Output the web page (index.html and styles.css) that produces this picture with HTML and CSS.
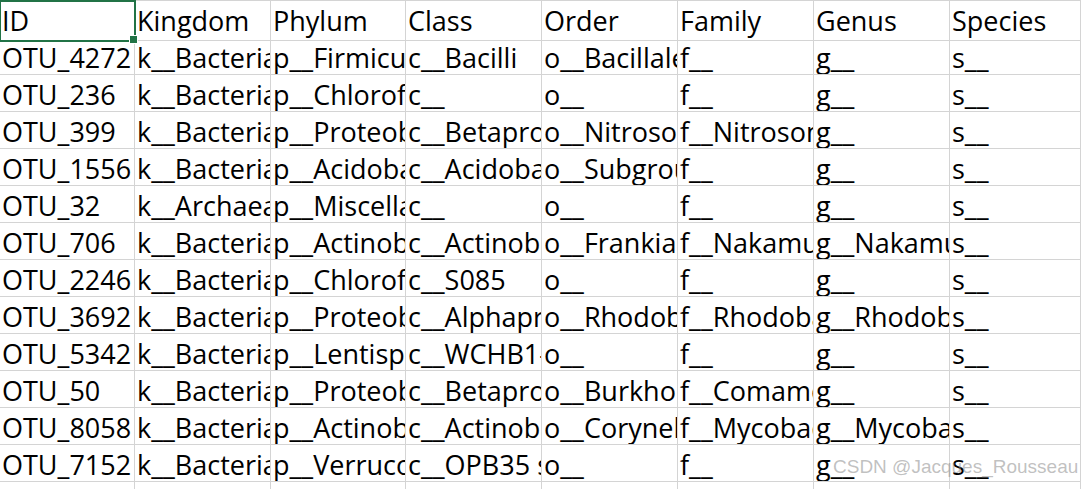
FILE: index.html
```html
<!DOCTYPE html>
<html>
<head>
<meta charset="utf-8">
<link rel="stylesheet" href="styles.css">
</head>
<body>
<div class="sheet">
  <div class="row">
    <div class="cell selected">ID<span class="handle"></span></div>
    <div class="cell">Kingdom</div>
    <div class="cell">Phylum</div>
    <div class="cell">Class</div>
    <div class="cell">Order</div>
    <div class="cell">Family</div>
    <div class="cell">Genus</div>
    <div class="cell">Species</div>
  </div>
  <div class="row">
    <div class="cell">OTU_4272</div><div class="cell">k__Bacteria</div><div class="cell">p__Firmicutes</div><div class="cell">c__Bacilli</div><div class="cell">o__Bacillales</div><div class="cell">f__</div><div class="cell">g__</div><div class="cell">s__</div>
  </div>
  <div class="row">
    <div class="cell">OTU_236</div><div class="cell">k__Bacteria</div><div class="cell">p__Chloroflexi</div><div class="cell">c__</div><div class="cell">o__</div><div class="cell">f__</div><div class="cell">g__</div><div class="cell">s__</div>
  </div>
  <div class="row">
    <div class="cell">OTU_399</div><div class="cell">k__Bacteria</div><div class="cell">p__Proteobacteria</div><div class="cell">c__Betaproteobacteria</div><div class="cell">o__Nitrosomonadales</div><div class="cell">f__Nitrosomonadaceae</div><div class="cell">g__</div><div class="cell">s__</div>
  </div>
  <div class="row">
    <div class="cell">OTU_1556</div><div class="cell">k__Bacteria</div><div class="cell">p__Acidobacteria</div><div class="cell">c__Acidobacteria</div><div class="cell">o__Subgroup_6</div><div class="cell">f__</div><div class="cell">g__</div><div class="cell">s__</div>
  </div>
  <div class="row">
    <div class="cell">OTU_32</div><div class="cell">k__Archaea</div><div class="cell">p__Miscellaneous</div><div class="cell">c__</div><div class="cell">o__</div><div class="cell">f__</div><div class="cell">g__</div><div class="cell">s__</div>
  </div>
  <div class="row">
    <div class="cell">OTU_706</div><div class="cell">k__Bacteria</div><div class="cell">p__Actinobacteria</div><div class="cell">c__Actinobacteria</div><div class="cell">o__Frankiales</div><div class="cell">f__Nakamurellaceae</div><div class="cell">g__Nakamurella</div><div class="cell">s__</div>
  </div>
  <div class="row">
    <div class="cell">OTU_2246</div><div class="cell">k__Bacteria</div><div class="cell">p__Chloroflexi</div><div class="cell">c__S085</div><div class="cell">o__</div><div class="cell">f__</div><div class="cell">g__</div><div class="cell">s__</div>
  </div>
  <div class="row">
    <div class="cell">OTU_3692</div><div class="cell">k__Bacteria</div><div class="cell">p__Proteobacteria</div><div class="cell">c__Alphaproteobacteria</div><div class="cell">o__Rhodobacterales</div><div class="cell">f__Rhodobacteraceae</div><div class="cell">g__Rhodobacter</div><div class="cell">s__</div>
  </div>
  <div class="row">
    <div class="cell">OTU_5342</div><div class="cell">k__Bacteria</div><div class="cell">p__Lentisphaerae</div><div class="cell">c__WCHB1-41</div><div class="cell">o__</div><div class="cell">f__</div><div class="cell">g__</div><div class="cell">s__</div>
  </div>
  <div class="row">
    <div class="cell">OTU_50</div><div class="cell">k__Bacteria</div><div class="cell">p__Proteobacteria</div><div class="cell">c__Betaproteobacteria</div><div class="cell">o__Burkholderiales</div><div class="cell">f__Comamonadaceae</div><div class="cell">g__</div><div class="cell">s__</div>
  </div>
  <div class="row">
    <div class="cell">OTU_8058</div><div class="cell">k__Bacteria</div><div class="cell">p__Actinobacteria</div><div class="cell">c__Actinobacteria</div><div class="cell">o__Corynebacteriales</div><div class="cell">f__Mycobacteriaceae</div><div class="cell">g__Mycobacterium</div><div class="cell">s__</div>
  </div>
  <div class="row">
    <div class="cell">OTU_7152</div><div class="cell">k__Bacteria</div><div class="cell">p__Verrucomicrobia</div><div class="cell">c__OPB35 soil group</div><div class="cell">o__</div><div class="cell">f__</div><div class="cell">g__</div><div class="cell">s__</div>
  </div>
  <div class="row tail">
    <div class="cell"></div><div class="cell"></div><div class="cell"></div><div class="cell"></div><div class="cell"></div><div class="cell"></div><div class="cell"></div><div class="cell"></div>
  </div>
</div>
<div class="watermark">CSDN @Jacques_Rousseau</div>
</body>
</html>
```
FILE: styles.css
```css
html, body {
  margin: 0;
  padding: 0;
  background: #ffffff;
  overflow: hidden;
}
body {
  width: 1081px;
  height: 489px;
  position: relative;
  font-family: "Open Sans", "Noto Sans", sans-serif;
  color: #000;
}
.sheet {
  border-top: 1px solid #d4d4d4;
}
.row {
  display: grid;
  grid-template-columns: 135px 136px 135px 136px 136px 136px 136px 1fr;
  height: 37px;
}
.row.tail {
  height: 7px;
}
.cell {
  position: relative;
  border-right: 1px solid #d4d4d4;
  border-bottom: 1px solid #d4d4d4;
  font-size: 27px;
  line-height: 39px;
  padding-left: 2px;
  white-space: nowrap;
  overflow: hidden;
}
.tail .cell {
  border-bottom: none;
}
.selected {
  overflow: visible;
  outline: 2px solid #217346;
  outline-offset: -1px;
  z-index: 2;
}
.handle {
  position: absolute;
  right: -4px;
  bottom: -4px;
  width: 7px;
  height: 7px;
  background: #217346;
  border: 1px solid #fff;
}
.watermark {
  position: absolute;
  left: 833px;
  top: 456px;
  font-family: "Liberation Sans", sans-serif;
  font-size: 19px;
  color: rgba(140, 140, 140, 0.55);
  white-space: nowrap;
}
```
